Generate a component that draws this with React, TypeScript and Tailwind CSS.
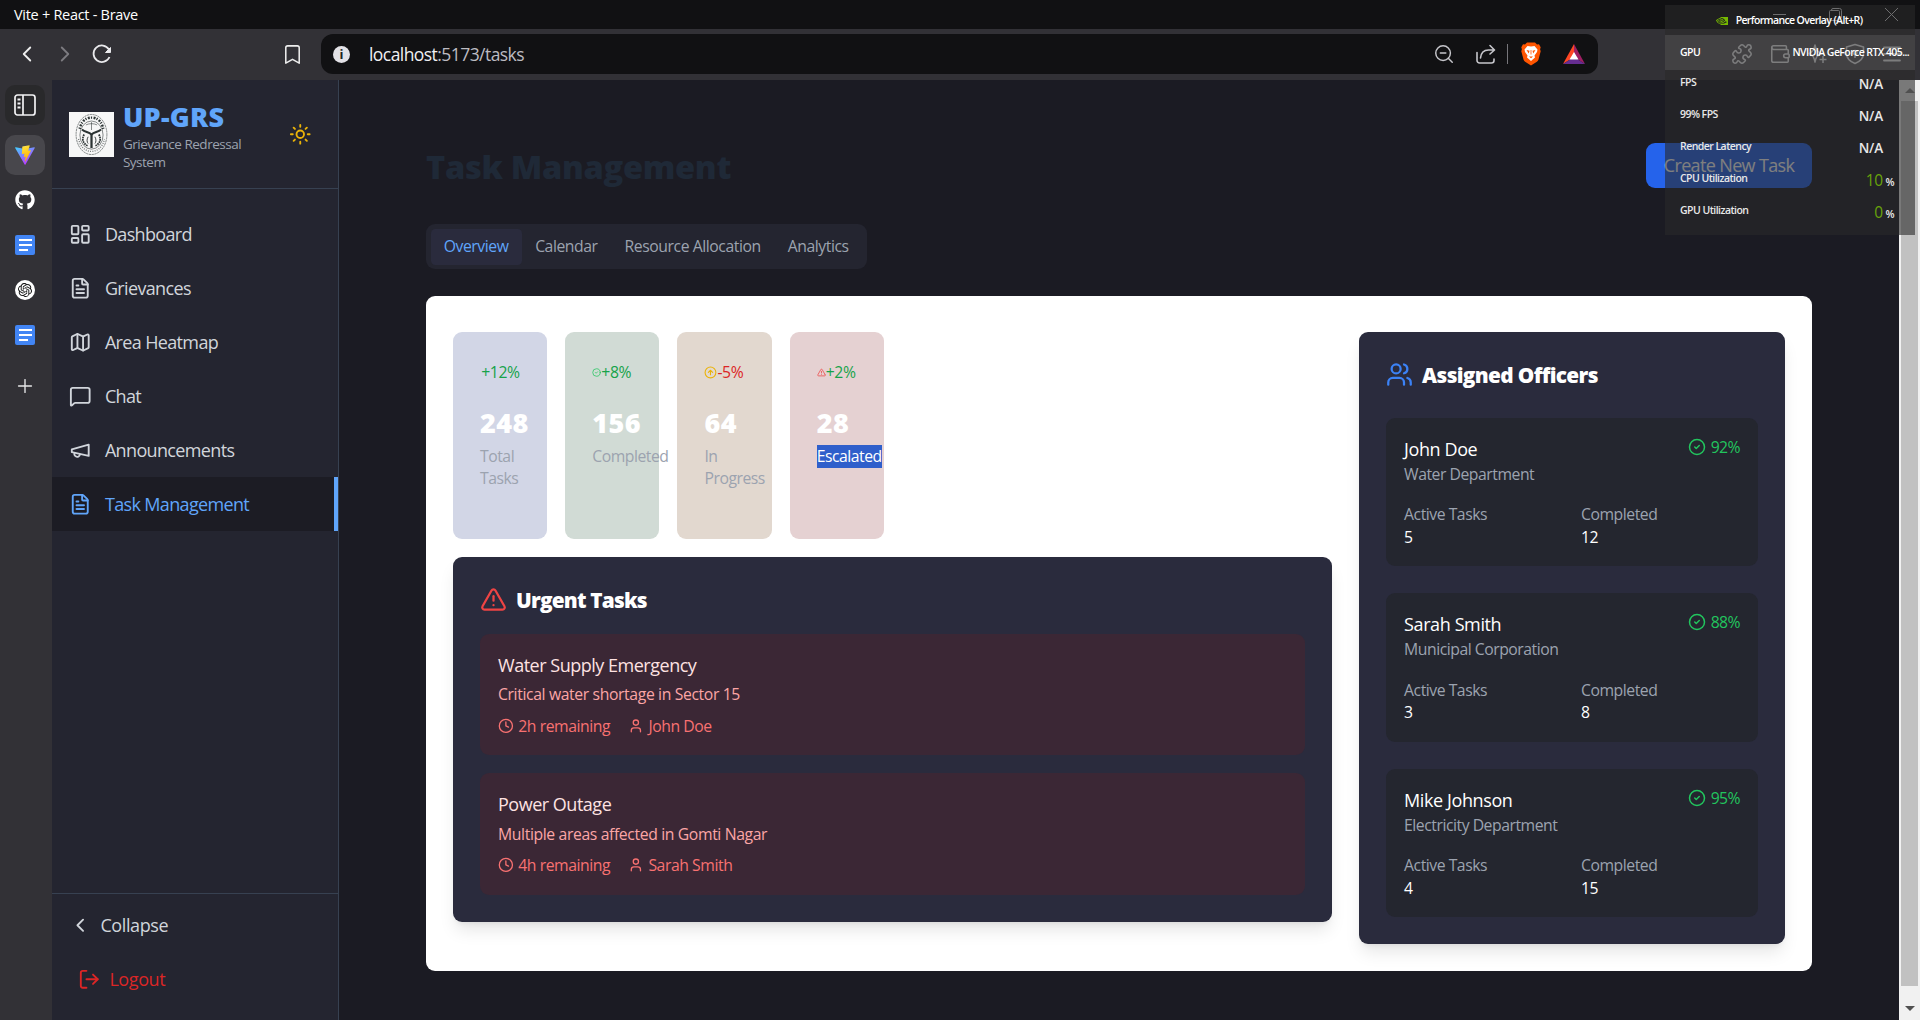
import React from 'react';
import {
  AlertTriangle, ArrowUpCircle, Bookmark, CheckCircle2, ChevronLeft, ChevronRight, Clock, FileText,
  LayoutDashboard, LogOut, Map as MapIcon, MessageSquare, Plus, Puzzle, Sun, User, Users, Wallet, ZoomOut,
} from 'lucide-react';
import { FaGithub } from 'react-icons/fa';
import { SiOpenai, SiNvidia } from 'react-icons/si';

function MegaphoneIcon({ size = 20 }: { size?: number }) {
  return (
    <svg width={size} height={size} viewBox="0 0 24 24" fill="none" stroke="currentColor" strokeWidth="2" strokeLinecap="round" strokeLinejoin="round">
      <path d="m3 11 18-5v12L3 14v-3z" />
      <path d="M11.6 16.8a3 3 0 1 1-5.800-1.600" />
    </svg>
  );
}

const navItems = [
  { label: 'Dashboard', icon: LayoutDashboard },
  { label: 'Grievances', icon: FileText },
  { label: 'Area Heatmap', icon: MapIcon },
  { label: 'Chat', icon: MessageSquare },
  { label: 'Announcements', icon: MegaphoneIcon },
  { label: 'Task Management', icon: FileText, active: true },
];

const urgentTasks = [
  { title: 'Water Supply Emergency', text: 'Critical water shortage in Sector 15', time: '2h remaining', who: 'John Doe' },
  { title: 'Power Outage', text: 'Multiple areas affected in Gomti Nagar', time: '4h remaining', who: 'Sarah Smith' },
];

const officers = [
  { name: 'John Doe', dept: 'Water Department', active: 5, done: 12, rate: '92%' },
  { name: 'Sarah Smith', dept: 'Municipal Corporation', active: 3, done: 8, rate: '88%' },
  { name: 'Mike Johnson', dept: 'Electricity Department', active: 4, done: 15, rate: '95%' },
];

function DocIcon() {
  return (
    <svg width="20" height="20" viewBox="0 0 20 20">
      <rect width="20" height="20" rx="2" fill="#4285f4" />
      <path d="M4 5h13M4 10h13M4 15h9" stroke="#fff" strokeWidth="2.2" />
    </svg>
  );
}

function ViteIcon() {
  return (
    <svg width="20" height="20" viewBox="0 0 32 32">
      <defs>
        <linearGradient id="va" x1="0" y1="0" x2="0.6" y2="1">
          <stop offset="0" stopColor="#41d1ff" />
          <stop offset="1" stopColor="#bd34fe" />
        </linearGradient>
        <linearGradient id="vb" x1="0.4" y1="0" x2="0.6" y2="1">
          <stop offset="0" stopColor="#ffea83" />
          <stop offset="0.1" stopColor="#ffdd35" />
          <stop offset="1" stopColor="#ffa800" />
        </linearGradient>
      </defs>
      <path d="M31.6 4.8 16.8 31.3a.8.8 0 0 1-1.4 0L.3 4.8a.8.8 0 0 1 .8-1.2L16 6.300 30.800 3.600a.8.8 0 0 1 .8 1.200Z" fill="url(#va)" />
      <path d="M23 .2 12 2.300a.4.4 0 0 0-.3.4l-.7 11.400c0 .3.200.5.500.4l3.100-.7c.3-.1.500.200.500.5l-.9 4.400c-.1.300.200.600.500.500l1.900-.6c.3-.1.600.200.500.5l-1.400 7c-.1.400.500.700.700.300l9-17.400c.2-.3-.1-.6-.4-.6l-3.200.6c-.3.1-.5-.2-.4-.5l2-7.100c.1-.3-.1-.6-.4-.5Z" fill="url(#vb)" />
    </svg>
  );
}

function PanelIcon() {
  return (
    <svg width="22" height="22" viewBox="0 0 22 22" fill="none" stroke="#f2f2f4" strokeWidth="1.7">
      <rect x="1" y="1" width="20" height="20" rx="2.500" />
      <path d="M9 1v20" />
      <path d="M3.500 5.500h3M3.500 9.500h3M3.500 13.500h3" strokeWidth="2" />
    </svg>
  );
}

function ReloadIcon() {
  return (
    <svg width="20" height="20" viewBox="0 0 20 20" fill="none" stroke="#e9e9ec" strokeWidth="1.800">
      <path d="M17.500 13A8.300 8.300 0 1 1 17 5.500" />
      <path d="M18.500 3.500v5h-5Z" fill="#e9e9ec" strokeWidth="1" />
    </svg>
  );
}

function ShareIcon() {
  return (
    <svg width="20" height="20" viewBox="0 0 20 20" fill="none" stroke="#c6c6cb" strokeWidth="1.600" strokeLinecap="round" strokeLinejoin="round">
      <path d="M1 8.500v8A2.500 2.500 0 0 0 3.500 19h12a2.500 2.500 0 0 0 2.500-2.500V15" />
      <path d="M4.500 14c.5-5 3.500-8 8-8H18M14 1.500 18.500 6 14 10" />
    </svg>
  );
}

function BraveIcon() {
  return (
    <svg width="20" height="24" viewBox="0 0 20 24">
      <path d="M6 .5h8L16 2.500l2-.2 1.700 3-.6 2 .6 2-2.200 8.200a4 4 0 0 1-1.600 2.200L10 23.500l-5.900-3.800a4 4 0 0 1-1.600-2.200L.3 9.300l.6-2-.6-2L2 2.300l2 .2Z" fill="#ff5500" />
      <path d="M10 4.500 13.500 4l3 3.500-.5 2.500-2.500 3.500.5 2L10 19l-4-3.500.5-2L4 10l-.5-2.500L6.500 4Z" fill="#fff" />
      <path d="m5.500 8 3 .8-.7 2.700ZM14.500 8l-3 .8.700 2.700ZM8 14.500h4L10 16.200ZM9.600 8h.8v4.500h-.8Z" fill="#ff5500" />
    </svg>
  );
}

function BatIcon() {
  return (
    <svg width="22" height="20" viewBox="0 0 22 20">
      <path d="M11 0 0 20l11-7Z" fill="#ff4724" />
      <path d="m11 0 11 20-11-7Z" fill="#9e1f63" />
      <path d="M0 20h22l-11-7Z" fill="#662d91" />
      <path d="m11 8 4.500 7.500h-9Z" fill="#fff" />
    </svg>
  );
}

function LeoIcon() {
  return (
    <svg width="22" height="22" viewBox="0 0 22 22" fill="none" stroke="currentColor" strokeWidth="1.500" strokeLinejoin="round">
      <path d="M9 2c1 5 2 6.500 6.500 8.500C11 12.500 10 14 9 19c-1-5-2-6.500-6-8.500C7 8.500 8 7 9 2Z" />
      <path d="M17 13v7M13.500 16.500h7" />
    </svg>
  );
}

function VpnIcon() {
  return (
    <svg width="22" height="22" viewBox="0 0 22 22" fill="none" stroke="currentColor" strokeWidth="1.600" strokeLinejoin="round">
      <path d="M11 1.500 19.500 4v6c0 5-3.500 8.500-8.500 10.500C6 18.500 2.500 15 2.500 10V4Z" />
      <circle cx="11" cy="9.500" r="2" />
      <path d="M11 11.500V15" />
    </svg>
  );
}

function MenuIcon() {
  return (
    <svg width="22" height="22" viewBox="0 0 22 22" fill="none" stroke="currentColor" strokeWidth="1.800" strokeLinecap="round">
      <path d="M3 4.500h16M3 11h16M3 17.500h16" />
    </svg>
  );
}

function Emblem() {
  return (
    <svg viewBox="0 0 40 40" className="h-10 w-10 shrink-0 bg-[#f7f7f7]" fill="none" stroke="#2c3434">
      <ellipse cx="20" cy="20" rx="13.700" ry="17.800" strokeWidth="0.500" strokeDasharray="2 0.500" />
      <path d="M9.500 15C11 8 15 5 20 5s9 3 10.500 10" strokeWidth="2.200" strokeDasharray="1 1.300 1.800 1" />
      <path d="M8.500 24c1.500 7 6 11 11.500 11s10-4 11.500-11" strokeWidth="1.200" strokeDasharray="0.800 1.200" opacity="0.700" />
      <ellipse cx="20" cy="20.500" rx="10.300" ry="12.500" strokeWidth="0.500" />
      <path d="M11.500 15.500c3 2.500 6 2 8.500 4.500 2.500-2.500 5.500-2 8.500-4.500" strokeWidth="1.800" />
      <path d="M20 19.500V32" strokeWidth="2" />
      <path d="M13.500 20c-2.500 4-1 8 3 10M26.500 20c2.500 4 1 8-3 10" strokeWidth="1.500" strokeDasharray="1.500 0.600" />
      <path d="M17 22c-1.500 2.500-1 5 0 6M23 22c1.500 2.500 1 5 0 6" strokeWidth="0.800" />
      <path d="M15 11.500c3-1.500 7-1.500 10 0M20 9v7" strokeWidth="0.500" />
    </svg>
  );
}

function BrowserChrome() {
  return (
    <>
      <div className="flex h-[29px] items-center bg-[#111113] pl-[14px] text-[14.500px] tracking-[-0.020em] text-white">Vite + React - Brave</div>
      <div className="flex h-[51px] items-center bg-[#323136] pb-px">
        <div className="flex w-[321px] items-center pl-[14px]">
          <ChevronLeft size={26} strokeWidth={1.700} className="text-[#eee]" />
          <ChevronRight size={26} strokeWidth={1.700} className="ml-[12px] text-[#7c7b80]" />
          <div className="ml-[14px]"><ReloadIcon /></div>
          <Bookmark size={23} strokeWidth={1.600} className="ml-[169px] text-[#eee]" />
        </div>
        <div className="flex h-[40px] w-[1277px] items-center rounded-[12px] bg-[#111113]">
          <div className="ml-[12px] flex h-[17px] w-[17px] items-center justify-center rounded-full bg-[#e3e2e7] text-[13px] font-bold leading-none text-[#222]">i</div>
          <div className="ml-[19px] text-[17.500px] tracking-[-0.032em] text-[#f0f0f2]">
            localhost<span className="text-[#bdbcc2]">:5173/tasks</span>
          </div>
          <div className="ml-auto flex items-center">
            <ZoomOut size={22} strokeWidth={1.600} className="text-[#c6c6cb]" />
            <div className="ml-[21px]"><ShareIcon /></div>
            <div className="ml-[11px] h-[20px] w-[1.500px] bg-[#77767b]" />
            <div className="ml-[13px]"><BraveIcon /></div>
            <div className="ml-[22px] mr-[13px]"><BatIcon /></div>
          </div>
        </div>
        <div className="ml-[133px] flex items-center gap-[15.500px] text-[#d4d4d8]">
          <Puzzle size={22} strokeWidth={1.700} />
          <Wallet size={22} strokeWidth={1.700} />
          <LeoIcon />
          <VpnIcon />
          <MenuIcon />
        </div>
      </div>
    </>
  );
}

function WindowControls() {
  return (
    <div className="absolute right-[22px] top-[8px] flex gap-[43px] text-[#d4d4d8]">
      <svg width="13" height="13" viewBox="0 0 13 13" stroke="currentColor"><path d="M0 6.500h13" /></svg>
      <svg width="13" height="13" viewBox="0 0 13 13" fill="none" stroke="currentColor">
        <rect x="0.500" y="2.500" width="10" height="10" rx="1" />
        <path d="M2.500 2.500V2A1.500 1.500 0 0 1 4 .5h6.500a2 2 0 0 1 2 2V9a1.500 1.500 0 0 1-1.500 1.500" />
      </svg>
      <svg width="13" height="13" viewBox="0 0 13 13" stroke="currentColor"><path d="m0 0 13 13M13 0 0 13" /></svg>
    </div>
  );
}

function TabStrip() {
  return (
    <div className="flex w-[52px] shrink-0 flex-col items-center bg-[#323136] pr-[2px] pt-[5px]">
      <div className="flex h-[40px] w-[40px] items-center justify-center rounded-[10px] bg-[#29292b]"><PanelIcon /></div>
      <div className="mt-[10px] flex h-[40px] w-[40px] items-center justify-center rounded-[10px] bg-[#48474c]"><ViteIcon /></div>
      <div className="mt-[15px] flex flex-col gap-[25px]">
        <FaGithub size={20} color="#fff" />
        <DocIcon />
        <div className="flex h-[20px] w-[20px] items-center justify-center rounded-full bg-white"><SiOpenai size={14} color="#111" /></div>
        <DocIcon />
      </div>
      <Plus size={22} strokeWidth={1.500} className="mt-[30px] text-[#e6e6e8]" />
    </div>
  );
}

function Sidebar() {
  return (
    <div className="w-[287px] shrink-0 bg-[#242530]">
      <aside className="flex h-full flex-col border-r border-[#374151] [zoom:1.125]">
        <div className="flex h-[97px] items-center border-b border-[#374151] pl-[15px] pr-4">
          <Emblem />
          <div className="ml-2 flex-1">
            <div className="translate-y-px text-[24px] font-extrabold leading-8 tracking-[0.010em] text-[#60a5fa]">UP-GRS</div>
            <div className="w-[115px] translate-y-px text-[12px] leading-4 tracking-[-0.036em] text-[#9ca3af]">Grievance Redressal System</div>
          </div>
          <Sun size={20} className="mr-2 text-[#eab308]" />
        </div>
        <nav className="mt-4 tracking-[-0.036em]">
          {navItems.map(({ label, icon: Icon, active }) => (
            <div
              key={label}
              className={`flex h-12 items-center gap-3 pl-[15px] text-base ${active ? 'border-r-4 border-[#60a5fa] bg-[#1c1c24] text-[#60a5fa]' : 'text-[#d1d5db]'}`}
            >
              <Icon size={20} />
              <span>{label}</span>
            </div>
          ))}
        </nav>
        <div className="mt-auto border-t border-[#374151] py-4 pl-[15px] tracking-[-0.022em]">
          <div className="flex items-center gap-2 text-[#d1d5db]"><ChevronLeft size={20} /><span>Collapse</span></div>
          <div className="mt-4 flex items-center gap-2 p-2 text-[#dc2626]"><LogOut size={20} /><span>Logout</span></div>
        </div>
      </aside>
    </div>
  );
}

function StatCards() {
  const card = 'h-[184px] rounded-lg px-6 pt-6';
  const row = 'flex h-6 items-center text-sm tracking-[-0.022em]';
  const value = 'mt-4 translate-y-px text-2xl leading-8 font-extrabold tracking-[0.016em] text-white';
  const label = 'mt-1 text-sm tracking-[-0.030em] text-[#9ca3af]';
  return (
    <div className="grid w-[383px] grid-cols-4 gap-4">
      <div className={`${card} bg-[#d2d6e6]`}>
        <div className={`${row} text-[#16a34a]`}><span className="ml-px">+12%</span></div>
        <div className={value}>248</div>
        <div className={label}>Total<br />Tasks</div>
      </div>
      <div className={`${card} bg-[#d1dbd5]`}>
        <div className={`${row} text-[#16a34a]`}><CheckCircle2 size={8} className="shrink-0 text-[#22c55e]" /><span>+8%</span></div>
        <div className={value}>156</div>
        <div className={label}>Completed</div>
      </div>
      <div className={`${card} bg-[#e2d8cf]`}>
        <div className={`${row} text-[#dc2626]`}><ArrowUpCircle size={11.500} className="shrink-0 text-[#eab308]" /><span>-5%</span></div>
        <div className={value}>64</div>
        <div className={label}>In<br />Progress</div>
      </div>
      <div className={`${card} bg-[#e5d1d2]`}>
        <div className={`${row} text-[#16a34a]`}><AlertTriangle size={8} className="shrink-0 text-[#ef4444]" /><span>+2%</span></div>
        <div className={value}>28</div>
        <div className={label}><span className="bg-[#2f5fcb] pb-px text-white">Escalated</span></div>
      </div>
    </div>
  );
}

function UrgentTasks() {
  return (
    <section className="mt-4 rounded-lg bg-[#2a2b3d] p-6 shadow-lg">
      <h2 className="mb-4 flex items-center text-[18.500px] leading-7 font-extrabold tracking-[-0.038em] text-white">
        <AlertTriangle size={24} className="mr-2 text-[#ef4444]" /><span className="translate-y-px">Urgent Tasks</span>
      </h2>
      <div className="space-y-4">
        {urgentTasks.map((t) => (
          <div key={t.title} className="rounded-lg bg-[#3b2735] p-4">
            <div className="text-base tracking-[-0.027em] text-[#fee2e2]">{t.title}</div>
            <div className="mt-1 text-sm tracking-[-0.024em] text-[#fca5a5]">{t.text}</div>
            <div className="mt-2 flex gap-4 text-sm tracking-[-0.028em] text-[#f87171]">
              <span className="flex items-center"><Clock size={14} className="mr-1" />{t.time}</span>
              <span className="flex items-center"><User size={14} className="mr-1" />{t.who}</span>
            </div>
          </div>
        ))}
      </div>
    </section>
  );
}

function Officers() {
  return (
    <section className="rounded-lg bg-[#2a2b3d] p-6 shadow-lg">
      <h2 className="mb-6 flex items-center text-[18.500px] leading-7 font-extrabold tracking-[-0.031em] text-white">
        <Users size={24} className="mr-2 text-[#3b82f6]" /><span className="translate-y-px">Assigned Officers</span>
      </h2>
      <div className="space-y-6">
        {officers.map((o) => (
          <div key={o.name} className="rounded-lg bg-[#24262f] p-4 text-sm tracking-[-0.030em] text-[#9ca3af]">
            <div className="flex items-start justify-between">
              <div>
                <div className="text-base tracking-[-0.022em] text-white">{o.name}</div>
                <div>{o.dept}</div>
              </div>
              <div className="flex items-center tracking-[-0.036em] text-[#22c55e]"><CheckCircle2 size={16} className="mr-1" />{o.rate}</div>
            </div>
            <div className="mt-4 grid grid-cols-2 gap-4">
              <div>Active Tasks<div className="text-white">{o.active}</div></div>
              <div>Completed<div className="text-white">{o.done}</div></div>
            </div>
          </div>
        ))}
      </div>
    </section>
  );
}

function Main() {
  return (
    <div className="min-w-0 flex-1 bg-[#1b1b23]">
      <main className="pt-14 [zoom:1.125]">
        <div className="mx-auto w-[1232px]">
          <header className="flex items-center justify-between">
            <h1 className="translate-y-[2px] text-[29px] leading-9 font-extrabold tracking-[-0.010em] text-[#1f2937]">Task Management</h1>
            <button className="h-10 w-[147.500px] whitespace-nowrap rounded-lg bg-[#2563eb] text-base tracking-[-0.036em] text-white">Create New Task</button>
          </header>
          <div className="mt-8 flex h-10 w-[392px] items-center rounded-lg bg-[#242530] p-1 text-sm tracking-[-0.028em] text-[#9ca3af]">
            <div className="flex h-8 w-[81px] items-center justify-center rounded-sm bg-[#2a2b3d] text-[#60a5fa]">Overview</div>
            <div className="px-3">Calendar</div>
            <div className="px-3">Resource Allocation</div>
            <div className="px-3">Analytics</div>
          </div>
          <div className="mt-6 flex items-start gap-6 rounded-lg bg-white px-6 pb-6 pt-8">
            <div className="flex-1"><StatCards /><UrgentTasks /></div>
            <div className="w-[378.600px]"><Officers /></div>
          </div>
        </div>
      </main>
    </div>
  );
}

function Scrollbar() {
  return (
    <div className="flex w-[21px] shrink-0 flex-col items-center bg-[#f1f1f1]">
      <div className="flex h-[21px] items-center"><div className="border-x-[5px] border-b-[5px] border-x-transparent border-b-[#8a8a8a]" /></div>
      <div className="w-[17px] flex-1 bg-[#c1c1c1]" />
      <div className="flex h-[34px] items-end pb-[9px]"><div className="border-x-[5px] border-t-[5px] border-x-transparent border-t-[#505050]" /></div>
    </div>
  );
}

function PerfOverlay() {
  const rows = [
    ['FPS', 'N/A'], ['99% FPS', 'N/A'], ['Render Latency', 'N/A'], ['CPU Utilization', '10'], ['GPU Utilization', '0'],
  ];
  return (
    <div className="absolute left-[1665px] top-[5px] h-[230px] w-[250px] bg-[#2a2a2a]/60 text-[10.500px] font-semibold text-[#e8e8e8]">
      <div className="flex h-[30px] items-center justify-center pr-[2px] pt-[2px] tracking-[-0.060em] text-white">
        <SiNvidia size={12} color="#76b900" className="mr-[8px]" />Performance Overlay (Alt+R)
      </div>
      <div className="flex h-[35px] items-center justify-between bg-white/10 pl-[15px] pr-[6px] tracking-[-0.056em] text-white">
        <span>GPU</span><span>NVIDIA GeForce RTX 405...</span>
      </div>
      <div className="-mt-[3px]">
        {rows.map(([k, v]) => (
          <div key={k} className="flex h-[32px] items-center justify-between pl-[15px] tracking-[-0.052em]">
            <span>{k}</span>
            {v === 'N/A' ? (
              <span className="mt-[2px] pr-[32px] text-[13.500px] tracking-[-0.010em]">{v}</span>
            ) : (
              <span className="mt-[4px] flex items-baseline pr-[21px]">
                <span className="mr-[3px] text-[15.500px] font-normal text-[#69a40a]">{v}</span>%
              </span>
            )}
          </div>
        ))}
      </div>
    </div>
  );
}

export default function App() {
  return (
    <div className="relative h-[1020px] w-[1920px] overflow-hidden bg-[#1b1b23] font-['Open_Sans',sans-serif]">
      <BrowserChrome />
      <div className="flex h-[940px]">
        <TabStrip />
        <Sidebar />
        <Main />
        <Scrollbar />
      </div>
      <WindowControls />
      <PerfOverlay />
    </div>
  );
}
